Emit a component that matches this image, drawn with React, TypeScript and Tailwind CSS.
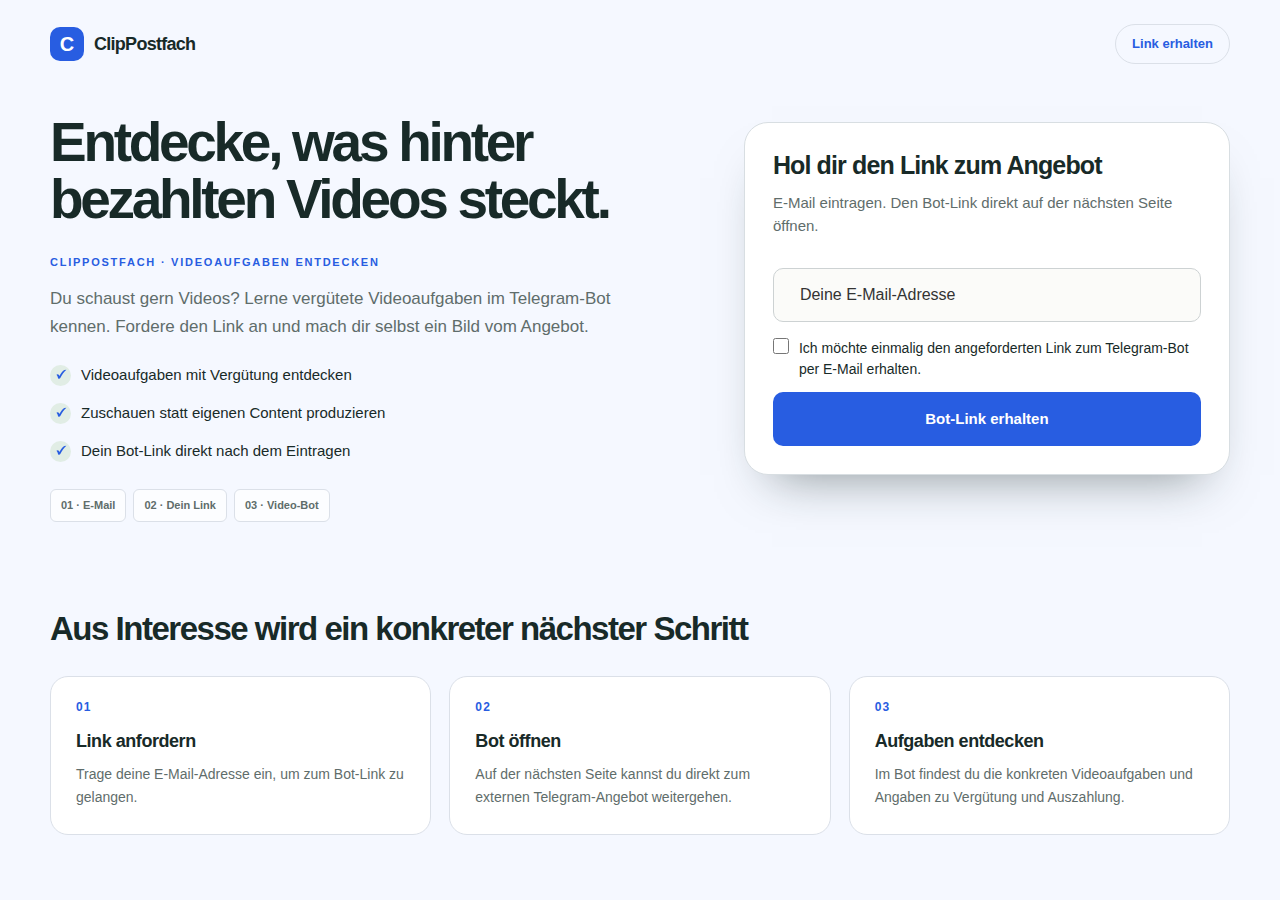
import { useState } from 'react';

const BENEFITS = [
  'Videoaufgaben mit Vergütung entdecken',
  'Zuschauen statt eigenen Content produzieren',
  'Dein Bot-Link direkt nach dem Eintragen',
];

const CHIPS = ['01 · E-Mail', '02 · Dein Link', '03 · Video-Bot'];

interface Step {
  number: string;
  title: string;
  text: string;
}

const STEPS: Step[] = [
  {
    number: '01',
    title: 'Link anfordern',
    text: 'Trage deine E-Mail-Adresse ein, um zum Bot-Link zu gelangen.',
  },
  {
    number: '02',
    title: 'Bot öffnen',
    text: 'Auf der nächsten Seite kannst du direkt zum externen Telegram-Angebot weitergehen.',
  },
  {
    number: '03',
    title: 'Aufgaben entdecken',
    text: 'Im Bot findest du die konkreten Videoaufgaben und Angaben zu Vergütung und Auszahlung.',
  },
];

function Header() {
  return (
    <header className="flex items-center justify-between py-6">
      <a href="#" className="flex items-center gap-2.5">
        <span className="flex size-[34px] items-center justify-center rounded-[10px] bg-[#285de1] text-xl font-bold text-white">
          C
        </span>
        <span className="text-lg font-bold tracking-[-0.04em]">ClipPostfach</span>
      </a>
      <a
        href="#anmelden"
        className="flex h-10 items-center rounded-full border border-[#dbe0e8] px-4 text-[13px] font-bold text-[#285de1]"
      >
        Link erhalten
      </a>
    </header>
  );
}

function CheckMark() {
  return (
    <span className="flex size-[21px] shrink-0 items-center justify-center rounded-full bg-[#e1ede5] text-[#285de1]">
      <svg viewBox="0 0 12 12" className="size-3" fill="currentColor" aria-hidden="true">
        <path d="M1.4 5.8 C2.2 4.9 3.4 4.9 3.9 6 L4.4 7.1 C5.7 4.6 7.4 2.1 9.3 1 L11.4 0.7 C8.9 2.8 6.9 5.8 5.3 9.1 C4.8 9.8 3.7 9.9 3.2 9.4 C2.7 8.2 2.4 6.5 1.4 5.8 Z" />
      </svg>
    </span>
  );
}

function Intro() {
  return (
    <div>
      <h1 className="text-[55px] leading-[57px] font-bold tracking-[-0.06em]">
        Entdecke, was hinter bezahlten Videos steckt.
      </h1>
      <p className="mt-[26px] text-[11px] leading-4 font-bold tracking-[0.16em] text-[#285de1] uppercase">
        ClipPostfach · Videoaufgaben entdecken
      </p>
      <p className="mt-[15px] max-w-[610px] text-[17px] leading-7 text-[#5f6d6b]">
        Du schaust gern Videos? Lerne vergütete Videoaufgaben im Telegram-Bot kennen. Fordere den
        Link an und mach dir selbst ein Bild vom Angebot.
      </p>
      <ul className="mt-[22px] flex flex-col gap-3.5 text-[15px] leading-6">
        {BENEFITS.map((benefit) => (
          <li key={benefit} className="flex items-center gap-2.5">
            <CheckMark />
            {benefit}
          </li>
        ))}
      </ul>
      <ul className="mt-[26px] flex flex-wrap gap-[7px]">
        {CHIPS.map((chip) => (
          <li
            key={chip}
            className="flex h-[33px] items-center rounded-md border border-[#dbe0e8] bg-white/70 px-2.5 text-[11px] font-bold text-[#5f6d6b]"
          >
            {chip}
          </li>
        ))}
      </ul>
    </div>
  );
}

function SignupCard() {
  const [email, setEmail] = useState('');
  const [consent, setConsent] = useState(false);

  return (
    <section
      id="anmelden"
      className="rounded-3xl border border-[#d8dee2] bg-white p-7 shadow-[0_28px_48px_-28px_rgba(24,42,40,0.5)]"
    >
      <h2 className="text-[25px] leading-7 font-bold tracking-[-0.035em]">
        Hol dir den Link zum Angebot
      </h2>
      <p className="mt-3 text-[15px] leading-[23px] text-[#5f6d6b]">
        E-Mail eintragen. Den Bot-Link direkt auf der nächsten Seite öffnen.
      </p>
      <form className="mt-[31px]" onSubmit={(e) => e.preventDefault()}>
        <input
          type="email"
          aria-label="Deine E-Mail-Adresse"
          placeholder="Deine E-Mail-Adresse"
          value={email}
          onChange={(e) => setEmail(e.target.value)}
          className="block h-[54px] w-full rounded-[10px] border border-[#cdd2d3] bg-[#fbfbf9] px-[26px] text-base placeholder:text-[#333333]"
        />
        <label className="mt-4 flex items-start gap-2.5 text-sm leading-[21px]">
          <input
            type="checkbox"
            checked={consent}
            onChange={(e) => setConsent(e.target.checked)}
            className="size-4 shrink-0"
          />
          Ich möchte einmalig den angeforderten Link zum Telegram-Bot per E-Mail erhalten.
        </label>
        <button
          type="submit"
          className="mt-3 h-[54px] w-full rounded-[10px] bg-[#285de1] text-[15px] font-bold text-white"
        >
          Bot-Link erhalten
        </button>
      </form>
    </section>
  );
}

function StepCard({ number, title, text }: Step) {
  return (
    <li className="rounded-[18px] border border-[#dbe0e8] bg-white px-[25px] pt-[22px] pb-[25px]">
      <span className="block text-xs leading-4 font-bold tracking-widest text-[#285de1]">
        {number}
      </span>
      <h3 className="mt-3.5 text-lg leading-6 font-bold tracking-[-0.025em]">{title}</h3>
      <p className="mt-2.5 text-sm leading-[23px] text-[#5f6d6b]">{text}</p>
    </li>
  );
}

export default function App() {
  return (
    <div className="min-h-screen bg-[#f5f8ff] font-['Liberation_Sans',Arial,sans-serif] text-[#182a28]">
      <div className="mx-auto max-w-[1220px] px-5">
        <Header />
        <main>
          <div className="grid items-start gap-10 pt-[26px] lg:grid-cols-[1.3fr_1fr] lg:gap-[62px]">
            <Intro />
            <div className="lg:pt-2">
              <SignupCard />
            </div>
          </div>
          <section className="pt-[86px] pb-16">
            <h2 className="text-[33px] leading-[42px] font-bold tracking-[-0.045em]">
              Aus Interesse wird ein konkreter nächster Schritt
            </h2>
            <ol className="mt-[26px] grid gap-[18px] md:grid-cols-3">
              {STEPS.map((step) => (
                <StepCard key={step.number} {...step} />
              ))}
            </ol>
          </section>
        </main>
      </div>
    </div>
  );
}
